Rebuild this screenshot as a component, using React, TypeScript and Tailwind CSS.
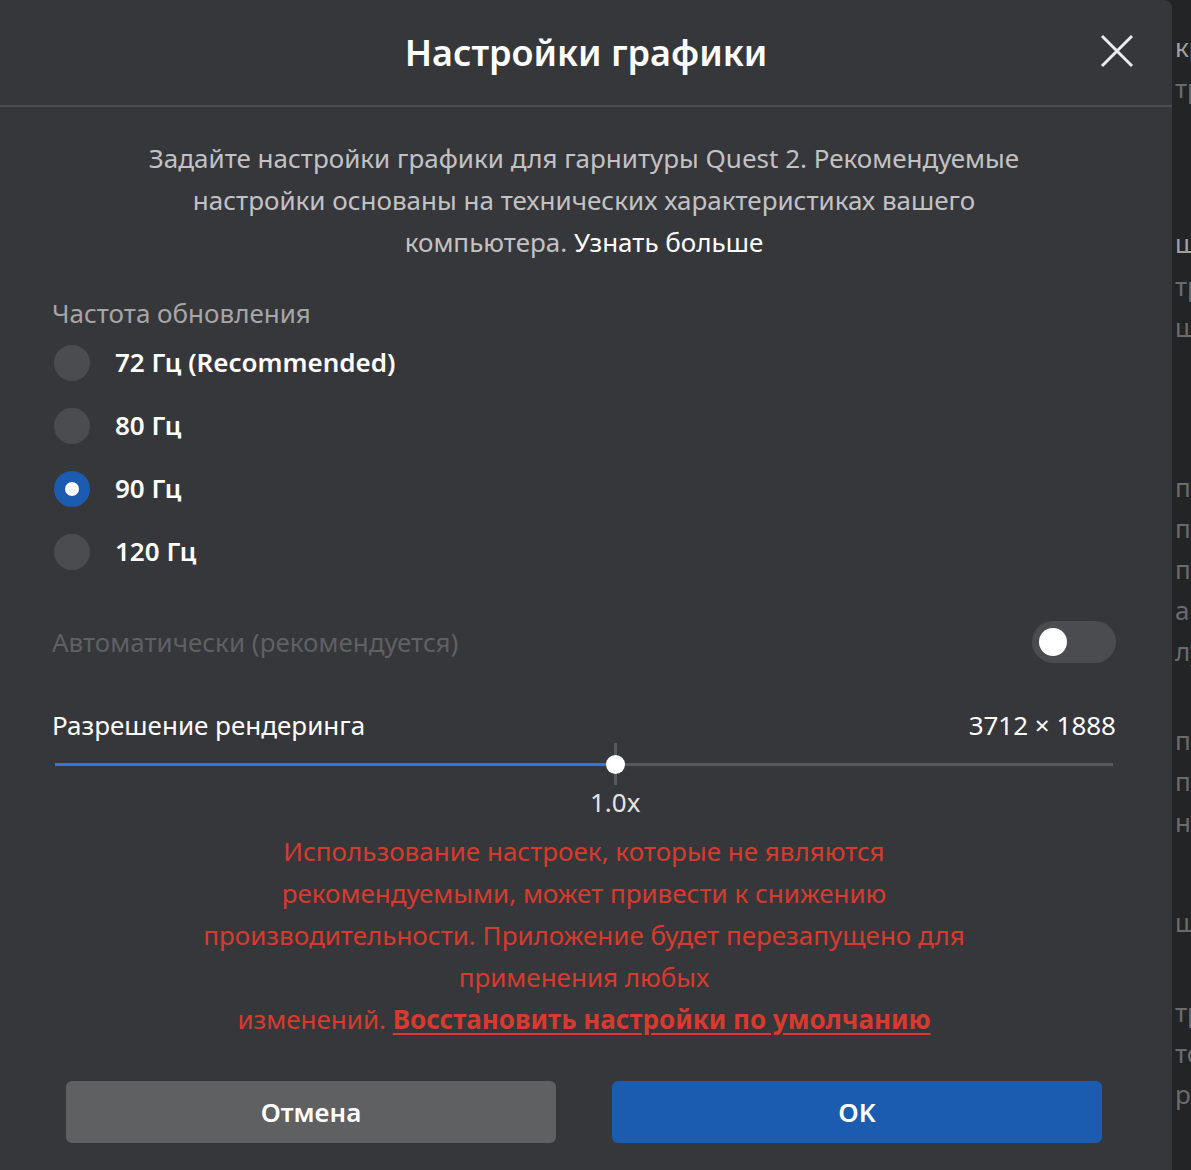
import { FC, useState } from 'react';

type Rate = { id: string; label: string };

const rates: Rate[] = [
  { id: '72', label: '72 Гц (Recommended)' },
  { id: '80', label: '80 Гц' },
  { id: '90', label: '90 Гц' },
  { id: '120', label: '120 Гц' },
];

// faint text of the page behind the dialog, cut off by the window edge
const backLines: { text: string; top: string; tone: string }[] = [
  { text: 'кран', top: 'mt-[27px]', tone: 'text-[#a0a0a2]' },
  { text: 'тройки', top: 'mt-0', tone: 'text-[#6a6b6d]' },
  { text: 'ширина', top: 'mt-[114px]', tone: 'text-[#a0a0a2]' },
  { text: 'тройки', top: 'mt-[2px]', tone: 'text-[#6a6b6d]' },
  { text: 'шлем', top: 'mt-0', tone: 'text-[#6a6b6d]' },
  { text: 'профиль', top: 'mt-[119px]', tone: 'text-[#6a6b6d]' },
  { text: 'пиксели', top: 'mt-0', tone: 'text-[#6a6b6d]' },
  { text: 'прочее', top: 'mt-0', tone: 'text-[#6a6b6d]' },
  { text: 'а также', top: 'mt-0', tone: 'text-[#6a6b6d]' },
  { text: 'лучше', top: 'mt-0', tone: 'text-[#6a6b6d]' },
  { text: 'просмотр', top: 'mt-[48px]', tone: 'text-[#6a6b6d]' },
  { text: 'прочее', top: 'mt-0', tone: 'text-[#6a6b6d]' },
  { text: 'ниже', top: 'mt-0', tone: 'text-[#6a6b6d]' },
  { text: 'шаг', top: 'mt-[59px]', tone: 'text-[#6a6b6d]' },
  { text: 'тройки', top: 'mt-[49px]', tone: 'text-[#6a6b6d]' },
  { text: 'только', top: 'mt-0', tone: 'text-[#6a6b6d]' },
  { text: 'режим', top: 'mt-0', tone: 'text-[#6a6b6d]' },
];

const Radio: FC<{ checked: boolean }> = ({ checked }) =>
  checked ? (
    <span className="flex h-9 w-9 items-center justify-center rounded-full bg-[#1b5cb0]">
      <span className="h-[14px] w-[14px] rounded-full bg-white" />
    </span>
  ) : (
    <span className="h-9 w-9 rounded-full bg-[#4b4c4f]" />
  );

const App: FC = () => {
  const [rate, setRate] = useState('90');
  const [auto, setAuto] = useState(false);

  return (
    <div
      className="flex h-[1170px] w-[1191px] overflow-hidden bg-[#232426]"
      style={{ fontFamily: '"Noto Sans", "Open Sans", sans-serif' }}
    >
      <div className="flex w-[1172px] shrink-0 flex-col rounded-tr-lg bg-[#36373a]">
        {/* header */}
        <div className="relative flex h-[107px] items-center justify-center border-b-2 border-[#4a4b4e]">
          <span className="text-[36px] font-semibold text-white">Настройки графики</span>
          <button className="absolute right-[38px] top-[34px] h-[34px] w-[34px] text-[#ececec]">
            <svg viewBox="0 0 34 34" className="h-full w-full" stroke="currentColor" strokeWidth="3">
              <path d="M2 2L32 32M32 2L2 32" />
            </svg>
          </button>
        </div>

        <div className="flex flex-col pl-[52px] pr-[56px]">
          <p className="mt-[30px] text-center text-[26px] leading-[42px] text-[#c2c2c4]">
            Задайте настройки графики для гарнитуры Quest 2. Рекомендуемые
            <br />
            настройки основаны на технических характеристиках вашего
            <br />
            компьютера. <span className="text-white">Узнать больше</span>
          </p>

          <span className="mt-[32px] text-[26px] leading-[36px] text-[#a6a6a8]">Частота обновления</span>

          <div className="flex flex-col">
            {rates.map((r) => (
              <label
                key={r.id}
                onClick={(): void => setRate(r.id)}
                className="flex h-[63px] cursor-pointer items-center gap-[25px] pl-[2px]"
              >
                <Radio checked={rate === r.id} />
                <span className="text-[26px] font-semibold text-white">{r.label}</span>
              </label>
            ))}
          </div>

          <div className="mt-[38px] flex h-[42px] items-center justify-between">
            <span className="text-[26px] text-[#5f6063]">Автоматически (рекомендуется)</span>
            <button
              onClick={(): void => setAuto(!auto)}
              className="flex h-[42px] w-[84px] items-center rounded-full bg-[#4b4c4f] px-[7px]"
            >
              <span className="h-[28px] w-[28px] rounded-full bg-white" />
            </button>
          </div>

          <div className="mt-[44px] flex h-[36px] items-center justify-between text-[26px] text-white">
            <span>Разрешение рендеринга</span>
            <span>3712 × 1888</span>
          </div>

          <div className="relative h-[42px] px-[3px]">
            <div className="mt-[20px] flex h-[3px] w-full">
              <div className="h-full w-[53%] bg-[#2a7be0]" />
              <div className="h-full flex-1 bg-[#58595c]" />
            </div>
            <div className="absolute left-[562px] top-0 h-[42px] w-[3px] bg-[#58595c]" />
            <div className="absolute left-[554px] top-[12px] h-[19px] w-[19px] rounded-full bg-white" />
          </div>

          <div className="flex h-[34px] items-center">
            <span className="ml-[538px] text-[26px] text-[#e4e4e4]">1.0x</span>
          </div>

          <p className="mt-[11px] text-center text-[26px] leading-[42px] text-[#d63b2d]">
            Использование настроек, которые не являются
            <br />
            рекомендуемыми, может привести к снижению
            <br />
            производительности. Приложение будет перезапущено для
            <br />
            применения любых
            <br />
            изменений.{' '}
            <a className="font-bold underline underline-offset-4">Восстановить настройки по умолчанию</a>
          </p>
        </div>

        <div className="mt-[41px] flex gap-[56px] pl-[66px]">
          <button className="h-[62px] w-[490px] rounded-md bg-[#5f6062] text-[26px] font-semibold text-white">
            Отмена
          </button>
          <button className="h-[62px] w-[490px] rounded-md bg-[#1b5cb0] text-[26px] font-semibold text-white">
            OK
          </button>
        </div>
      </div>

      <div className="flex flex-1 flex-col overflow-hidden pl-[3px]">
        {backLines.map((l, i) => (
          <span key={i} className={`${l.top} ${l.tone} whitespace-nowrap text-[26px] leading-[41px]`}>
            {l.text}
          </span>
        ))}
      </div>
    </div>
  );
};

export default App;
